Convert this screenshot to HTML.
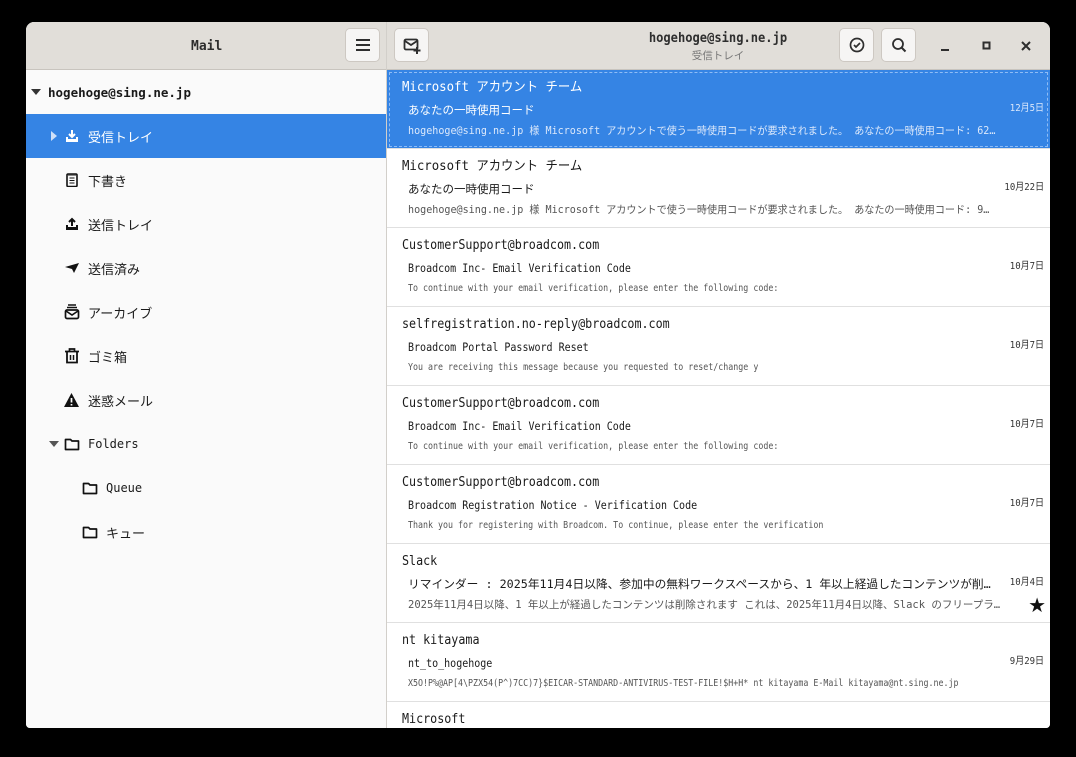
<!DOCTYPE html>
<html><head><meta charset="utf-8"><style>
*{box-sizing:border-box;margin:0;padding:0}
body{width:1076px;height:757px;background:#000;position:relative;overflow:hidden;font-family:"DejaVu Sans Mono","Liberation Mono","Noto Sans CJK JP",monospace;color:#1a1a1a}
.win{position:absolute;left:26px;top:22px;width:1024px;height:706px;background:#fff;border-radius:8px 8px 4px 4px;overflow:hidden}
.hdr{position:absolute;left:0;top:0;width:1024px;height:48px;background:#e1ded9;border-bottom:1px solid #c8c4be}
.sep{position:absolute;left:360px;top:0;width:1px;height:706px;background:#d2cfca}
.btn{position:absolute;top:6px;width:35px;height:34px;border:1px solid #cdc8c2;border-radius:5px;background:#f6f5f4;display:flex;align-items:center;justify-content:center}
.side{position:absolute;left:0;top:48px;width:360px;height:658px;background:#fafafa}
.si{position:absolute;left:0;width:360px;height:44px;display:flex;align-items:center;font-size:13px;font-family:"Liberation Sans","Noto Sans CJK JP",sans-serif}
.si svg{position:absolute}
.si span{position:absolute}
.list{position:absolute;left:361px;top:48px;width:663px}
.row{position:relative;height:79px;border-bottom:1px solid #e0e0e0;background:#fff}
.row>div{line-height:16px;height:16px}
.row .s{position:absolute;left:15px;top:10px;font-size:13px;white-space:nowrap;transform-origin:left}
.row .j{position:absolute;left:21px;top:32px;font-size:11.5px;white-space:nowrap;transform-origin:left}
.row .p{position:absolute;left:21px;top:53px;font-size:9.5px;color:#555;white-space:nowrap;transform:scaleX(.875);transform-origin:left}
.row .p.c{font-size:10.5px;transform:scaleX(.96)}
.lat .s{transform:scaleX(.9)}
.lat .j{transform:scaleX(.87)}
.row .d{position:absolute;right:6px;top:31px;font-size:10px;color:#333;transform:scaleX(.9);transform-origin:right}
.sel{background:#3584e4;color:#fff;outline:1px dashed #8fbcf5;outline-offset:-3px}
.sel .p,.sel .d{color:#dbe8fb}
</style></head><body>
<div class="win">
<div class="hdr">
 <div style="position:absolute;left:165px;top:17px;font-size:13px;font-weight:bold;color:#2e2e2e">Mail</div>
 <div class="btn" style="left:319px"><svg width="16" height="14"><path d="M1 2h14M1 7h14M1 12h14" stroke="#2e2e2e" stroke-width="2"/></svg></div>
 <div class="btn" style="left:368px"><svg width="18" height="18"><rect x="1.5" y="3.5" width="13" height="10" rx="1.5" fill="none" stroke="#2e2e2e" stroke-width="1.8"/><path d="M2 5l6 4 6-4" fill="none" stroke="#2e2e2e" stroke-width="1.8"/><path d="M14 11v7M10.5 14.5h7" stroke="#2e2e2e" stroke-width="2"/></svg></div>
 <div style="position:absolute;left:692px;top:9px;font-size:13px;font-weight:bold;color:#2e2e2e;transform:translateX(-50%) scaleX(.93);white-space:nowrap">hogehoge@sing.ne.jp</div>
 <div style="position:absolute;left:692px;top:26px;font-size:10.5px;color:#777;transform:translateX(-50%);font-family:'Noto Sans CJK JP',sans-serif;white-space:nowrap">受信トレイ</div>
 <div class="btn" style="left:813px"><svg width="16" height="16"><circle cx="8" cy="8" r="6.5" fill="none" stroke="#2e2e2e" stroke-width="1.7"/><path d="M5 8l2 2 4-4" fill="none" stroke="#2e2e2e" stroke-width="1.7"/></svg></div>
 <div class="btn" style="left:855px"><svg width="16" height="16"><circle cx="7" cy="7" r="5" fill="none" stroke="#2e2e2e" stroke-width="1.8"/><path d="M10.5 10.5l4 4" stroke="#2e2e2e" stroke-width="2"/></svg></div>
 <svg style="position:absolute;left:914px;top:20px" width="10" height="10"><path d="M1 8h8" stroke="#2e2e2e" stroke-width="2"/></svg>
 <svg style="position:absolute;left:956px;top:19px" width="10" height="10"><rect x="1.5" y="1.5" width="6" height="6" fill="none" stroke="#2e2e2e" stroke-width="2"/></svg>
 <svg style="position:absolute;left:995px;top:19px" width="10" height="10"><path d="M1 1l8 8M9 1l-8 8" stroke="#2e2e2e" stroke-width="2"/></svg>
</div>
<div class="side">
 <div class="si" style="top:0"><svg style="left:4px" width="12" height="12"><path d="M1 3h10l-5 6z" fill="#333"/></svg><span style="left:22px;font-weight:bold;font-family:'DejaVu Sans Mono',monospace;font-size:12.5px">hogehoge@sing.ne.jp</span></div>
 <div class="si" style="top:44px;background:#3584e4;color:#fff"><svg style="left:24px" width="8" height="12"><path d="M1 1v10l6-5z" fill="#cfe0f8"/></svg><svg style="left:39px" width="14" height="14"><path d="M7 1v7M4 5l3 3 3-3" stroke="#fff" stroke-width="2" fill="none"/><path d="M1 8v5h12V8h-2v2H3V8z" fill="#fff"/></svg><span style="left:62px">受信トレイ</span></div>
 <div class="si" style="top:88px"><svg style="left:39px" width="14" height="14"><rect x="2" y="1" width="10" height="12.5" rx="1" fill="none" stroke="#111" stroke-width="1.6"/><path d="M4.5 5h5M4.5 7.5h5M4.5 10h5M4 1v2M6 1v2M8 1v2M10 1v2" stroke="#111" stroke-width="1"/></svg><span style="left:62px">下書き</span></div>
 <div class="si" style="top:132px"><svg style="left:39px" width="14" height="14"><path d="M7 9V2M4 5l3-3 3 3" stroke="#111" stroke-width="2" fill="none"/><path d="M1 8v5h12V8h-2v2H3V8z" fill="#111"/></svg><span style="left:62px">送信トレイ</span></div>
 <div class="si" style="top:176px"><svg style="left:38px" width="16" height="14"><path d="M1 6l14-4-5 10-2-4z" fill="#111"/></svg><span style="left:62px">送信済み</span></div>
 <div class="si" style="top:220px"><svg style="left:38px" width="16" height="16"><path d="M4 1h8M3 3.5h10" stroke="#111" stroke-width="1.5"/><rect x="1.5" y="6" width="13" height="8.5" rx="1.5" fill="none" stroke="#111" stroke-width="1.7"/><path d="M2 7l6 4 6-4" fill="none" stroke="#111" stroke-width="1.6"/></svg><span style="left:62px">アーカイブ</span></div>
 <div class="si" style="top:264px"><svg style="left:38px" width="16" height="16"><path d="M1 3.5h14M5.5 3V1h5v2" stroke="#111" stroke-width="1.7" fill="none"/><path d="M3 4v10.5h10V4" stroke="#111" stroke-width="1.8" fill="none"/><path d="M6.5 7v5M9.5 7v5" stroke="#111" stroke-width="1.5"/></svg><span style="left:62px">ゴミ箱</span></div>
 <div class="si" style="top:308px"><svg style="left:37px" width="17" height="16"><path d="M8.5 1L16 15H1z" fill="#111"/><path d="M8.5 6v4.5M8.5 12v1.5" stroke="#fff" stroke-width="1.7"/></svg><span style="left:62px">迷惑メール</span></div>
 <div class="si" style="top:352px"><svg style="left:22px" width="12" height="12"><path d="M1 3h10l-5 6z" fill="#555"/></svg><svg style="left:38px" width="16" height="14"><path d="M1.5 2.5h5l1.5 1.5h6.5v8.5h-13z" fill="none" stroke="#111" stroke-width="1.7" stroke-linejoin="round"/></svg><span style="left:62px;font-family:'DejaVu Sans Mono',monospace;font-size:12px">Folders</span></div>
 <div class="si" style="top:396px"><svg style="left:56px" width="16" height="14"><path d="M1.5 2.5h5l1.5 1.5h6.5v8.5h-13z" fill="none" stroke="#111" stroke-width="1.7" stroke-linejoin="round"/></svg><span style="left:80px;font-family:'DejaVu Sans Mono',monospace;font-size:12px">Queue</span></div>
 <div class="si" style="top:440px"><svg style="left:56px" width="16" height="14"><path d="M1.5 2.5h5l1.5 1.5h6.5v8.5h-13z" fill="none" stroke="#111" stroke-width="1.7" stroke-linejoin="round"/></svg><span style="left:80px">キュー</span></div>
</div>
<div class="sep"></div>
<div class="list">
 <div class="row sel"><div class="s" style="transform:scaleX(.95)">Microsoft アカウント チーム</div><div class="j">あなたの一時使用コード</div><div class="p c">hogehoge@sing.ne.jp 様 Microsoft アカウントで使う一時使用コードが要求されました。 あなたの一時使用コード: 62…</div><div class="d">12月5日</div></div>
 <div class="row"><div class="s" style="transform:scaleX(.95)">Microsoft アカウント チーム</div><div class="j">あなたの一時使用コード</div><div class="p c">hogehoge@sing.ne.jp 様 Microsoft アカウントで使う一時使用コードが要求されました。 あなたの一時使用コード: 9…</div><div class="d">10月22日</div></div>
 <div class="row lat"><div class="s">CustomerSupport@broadcom.com</div><div class="j">Broadcom Inc- Email Verification Code</div><div class="p">To continue with your email verification, please enter the following code:</div><div class="d">10月7日</div></div>
 <div class="row lat"><div class="s">selfregistration.no-reply@broadcom.com</div><div class="j">Broadcom Portal Password Reset</div><div class="p">You are receiving this message because you requested to reset/change y</div><div class="d">10月7日</div></div>
 <div class="row lat"><div class="s">CustomerSupport@broadcom.com</div><div class="j">Broadcom Inc- Email Verification Code</div><div class="p">To continue with your email verification, please enter the following code:</div><div class="d">10月7日</div></div>
 <div class="row lat"><div class="s">CustomerSupport@broadcom.com</div><div class="j">Broadcom Registration Notice - Verification Code</div><div class="p">Thank you for registering with Broadcom. To continue, please enter the verification</div><div class="d">10月7日</div></div>
 <div class="row"><div class="s" style="transform:scaleX(.9)">Slack</div><div class="j" style="transform:scaleX(1.02)">リマインダー : 2025年11月4日以降、参加中の無料ワークスペースから、1 年以上経過したコンテンツが削…</div><div class="p c" style="transform:scaleX(1)">2025年11月4日以降、1 年以上が経過したコンテンツは削除されます これは、2025年11月4日以降、Slack のフリープラ…</div><div class="d">10月4日</div><div style="position:absolute;right:4px;top:51px;font-size:20px;color:#111;font-family:'DejaVu Sans',sans-serif;line-height:20px;height:20px">★</div></div>
 <div class="row lat"><div class="s">nt kitayama</div><div class="j">nt_to_hogehoge</div><div class="p">X5O!P%@AP[4\PZX54(P^)7CC)7}$EICAR-STANDARD-ANTIVIRUS-TEST-FILE!$H+H* nt kitayama E-Mail kitayama@nt.sing.ne.jp</div><div class="d">9月29日</div></div>
 <div class="row lat"><div class="s">Microsoft</div></div>
</div>
</div>
</body></html>
